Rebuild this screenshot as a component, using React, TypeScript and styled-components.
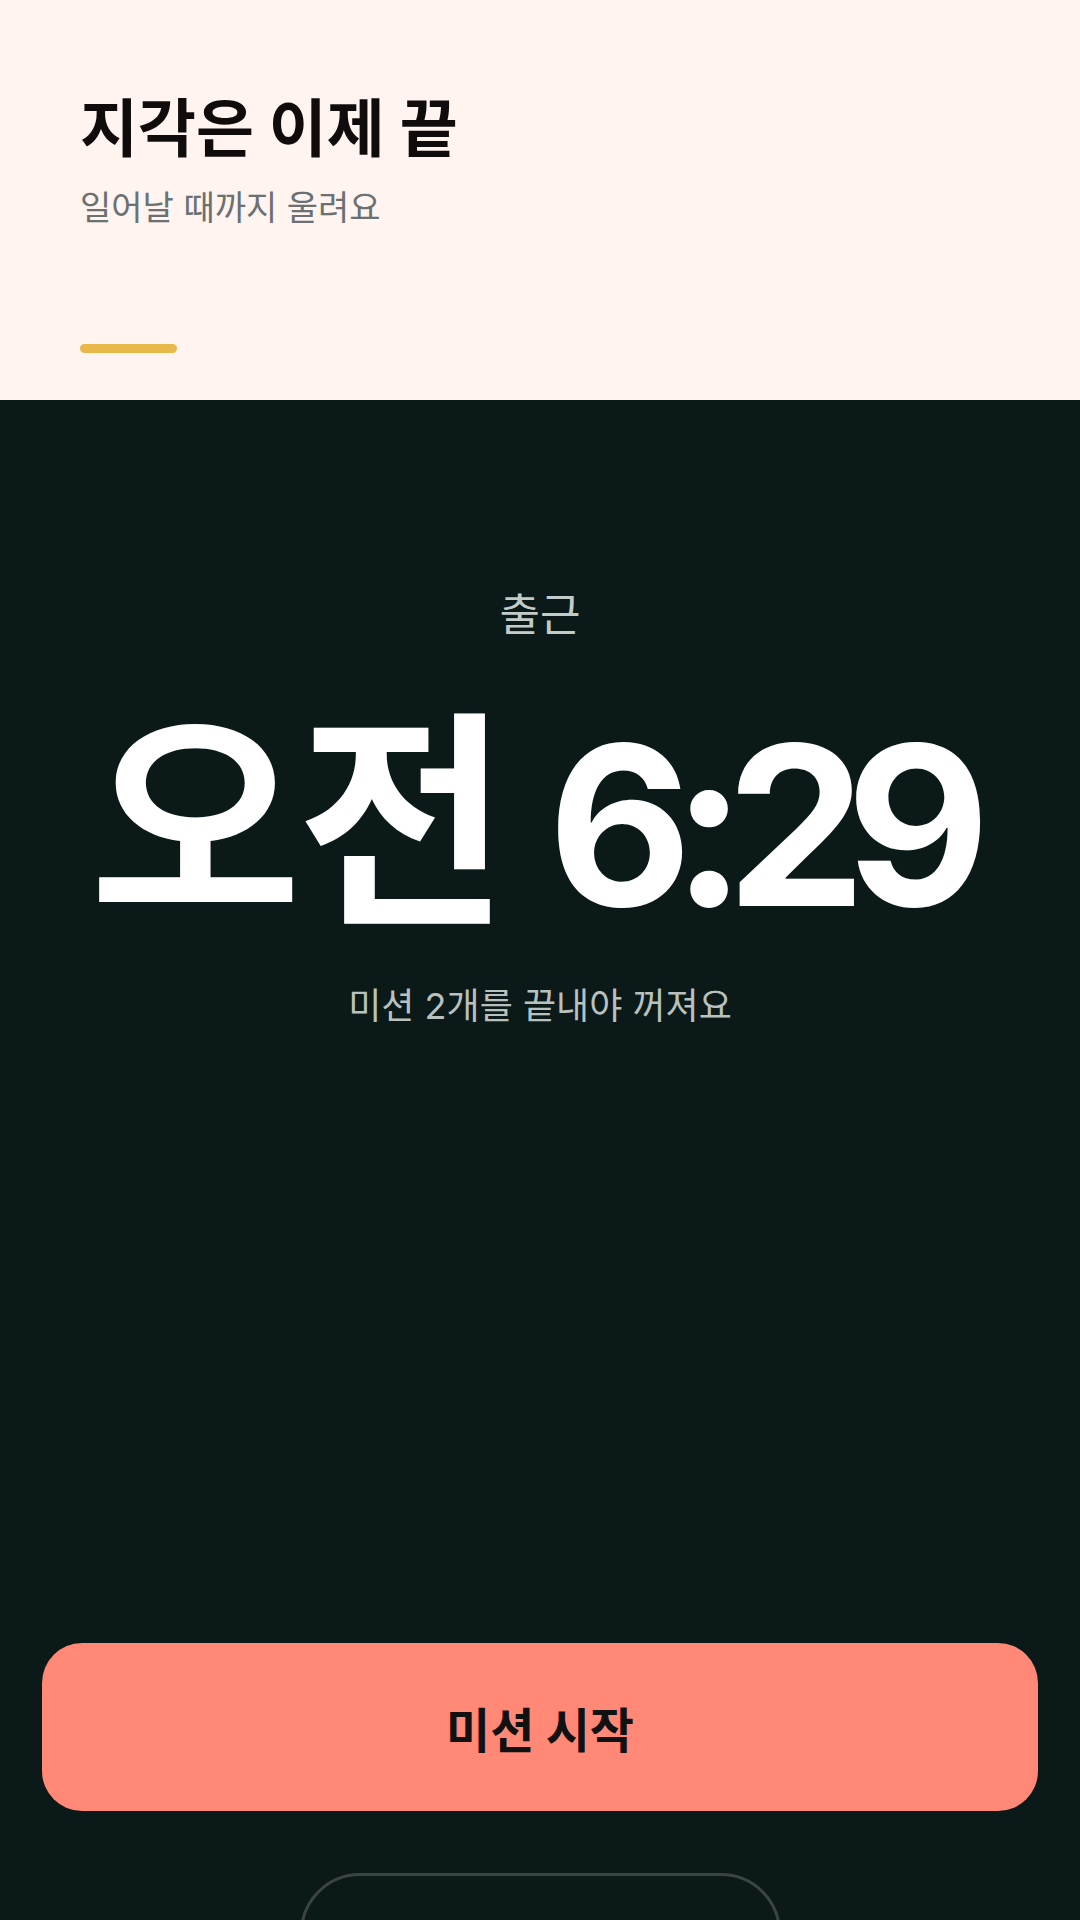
import React from "react";
import styled, { createGlobalStyle } from "styled-components";

const GlobalStyle = createGlobalStyle`
  html, body {
    margin: 0;
    padding: 0;
    background: #0b1919;
  }
  * {
    box-sizing: border-box;
  }
`;

const Screen = styled.div`
  width: 1080px;
  height: 1920px;
  overflow: hidden;
  display: flex;
  flex-direction: column;
  font-family: Inter, "Noto Sans CJK KR", "Noto Sans", sans-serif;
`;

const Header = styled.header`
  height: 400px;
  flex-shrink: 0;
  background: #fff4f0;
  padding: 88px 80px 0;
  display: flex;
  flex-direction: column;
`;

const Title = styled.h1`
  margin: 0;
  font-size: 63px;
  line-height: 80px;
  font-weight: 700;
  color: #0f0c0b;
`;

const Subtitle = styled.p`
  margin: 17px 0 0;
  font-size: 34px;
  line-height: 46px;
  font-weight: 400;
  color: #6b7070;
`;

const Indicator = styled.div`
  margin-top: auto;
  margin-bottom: 47px;
  width: 97px;
  height: 9px;
  border-radius: 5px;
  background: #e8b94a;
`;

const Body = styled.main`
  flex-shrink: 0;
  background: #0b1919;
  display: flex;
  flex-direction: column;
  align-items: center;
  padding-top: 185px;
`;

const Label = styled.div`
  font-size: 44px;
  line-height: 60px;
  color: #c3cbc9;
`;

const Time = styled.div`
  margin-top: 37px;
  height: 280px;
  display: flex;
  align-items: baseline;
  font-weight: 700;
  color: #ffffff;
  white-space: nowrap;
`;

const Meridiem = styled.span`
  font-size: 230px;
  line-height: 280px;
  letter-spacing: -4px;
`;

const Clock = styled.span`
  margin-left: 43px;
  margin-right: 20px;
  font-size: 222px;
  line-height: 280px;
  letter-spacing: -20px;
`;

const Hint = styled.div`
  margin-top: 18px;
  font-size: 36px;
  line-height: 52px;
  color: #b9c1bf;
`;

const PrimaryButton = styled.button`
  margin-top: 611px;
  width: 996px;
  height: 168px;
  flex-shrink: 0;
  border: none;
  border-radius: 40px;
  background: #ff8877;
  color: #111;
  font-family: inherit;
  font-size: 48px;
  font-weight: 700;
`;

const GhostButton = styled.button`
  margin-top: 62px;
  width: 481px;
  height: 168px;
  flex-shrink: 0;
  border: 3px solid #3b4443;
  border-radius: 60px;
  background: transparent;
`;

export default function App() {
  return (
    <>
      <GlobalStyle />
      <Screen>
        <Header>
          <Title>지각은 이제 끝</Title>
          <Subtitle>일어날 때까지 울려요</Subtitle>
          <Indicator />
        </Header>
        <Body>
          <Label>출근</Label>
          <Time>
            <Meridiem>오전</Meridiem>
            <Clock>6:29</Clock>
          </Time>
          <Hint>미션 2개를 끝내야 꺼져요</Hint>
          <PrimaryButton>미션 시작</PrimaryButton>
          <GhostButton aria-hidden="true" />
        </Body>
      </Screen>
    </>
  );
}
